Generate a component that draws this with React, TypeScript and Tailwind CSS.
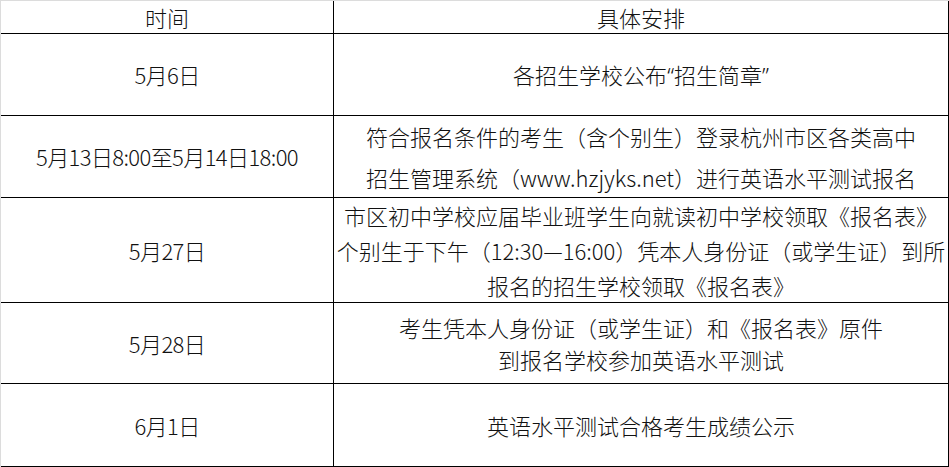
import React from "react";

type Row = {
  time: string;
  lines: React.ReactNode[];
  h: string;
  leading: string;
};

const Q: React.FC<{ c: string }> = ({ c }) => (
  <span style={{ fontFamily: '"Noto Sans", sans-serif' }}>{c}</span>
);

const rows: Row[] = [
  {
    time: "5月6日",
    lines: [
      <>
        各招生学校公布<Q c="“" />招生简章<Q c="”" />
      </>,
    ],
    h: "h-[82px]",
    leading: "leading-[36px]",
  },
  {
    time: "5月13日8:00至5月14日18:00",
    lines: ["符合报名条件的考生（含个别生）登录杭州市区各类高中", "招生管理系统（www.hzjyks.net）进行英语水平测试报名"],
    h: "h-[82px]",
    leading: "leading-[41px]",
  },
  {
    time: "5月27日",
    lines: [
      "市区初中学校应届毕业班学生向就读初中学校领取《报名表》",
      "个别生于下午（12:30—16:00）凭本人身份证（或学生证）到所",
      "报名的招生学校领取《报名表》",
    ],
    h: "h-[105px]",
    leading: "leading-[35px]",
  },
  {
    time: "5月28日",
    lines: ["考生凭本人身份证（或学生证）和《报名表》原件", "到报名学校参加英语水平测试"],
    h: "h-[81px]",
    leading: "leading-[32px]",
  },
  { time: "6月1日", lines: ["英语水平测试合格考生成绩公示"], h: "h-[83px]", leading: "leading-[36px]" },
];

const App: React.FC = () => {
  return (
    <div
      className="w-[949px] h-[467px] bg-white border-t border-l border-[#dcdcdc] text-[22px] font-light text-[#111]"
      style={{ fontFamily: '"Noto Sans CJK SC", "Noto Sans", sans-serif' }}
    >
      <div className="border-r border-black h-[466px] flex flex-col">
        <div className="flex h-[33px] border-b border-black leading-[32px]">
          <div className="w-[333px] border-r border-black flex items-center justify-center">时间</div>
          <div className="flex-1 flex items-center justify-center">具体安排</div>
        </div>
        {rows.map((r, i) => (
          <div key={r.time} className={`flex border-b border-black ${r.h}`}>
            <div className="w-[333px] border-r border-black flex items-center justify-center whitespace-nowrap tracking-[-0.6px]">
              {r.time}
            </div>
            <div className={`flex-1 flex flex-col items-center justify-center whitespace-nowrap ${r.leading}`}>
              {r.lines.map((l, j) => (
                <div key={`${i}-${j}`}>{l}</div>
              ))}
            </div>
          </div>
        ))}
      </div>
    </div>
  );
};

export default App;
